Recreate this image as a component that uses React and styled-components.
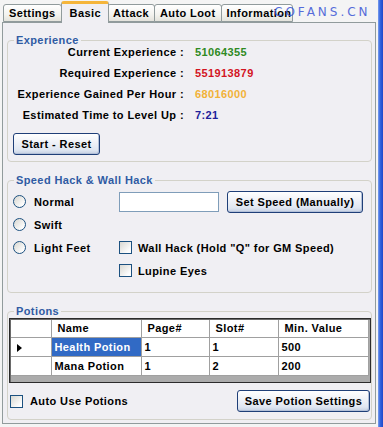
import React from 'react';
import styled, { createGlobalStyle } from 'styled-components';

const Global = createGlobalStyle`
  html, body { margin: 0; padding: 0; background: #f3f3f3; }
  body { font-family: "Liberation Sans", Arial, sans-serif; }
  * { box-sizing: border-box; }
`;

const PANEL_BG = '#f0eff3';

const Window = styled.div`
  position: relative;
  width: 383px;
  height: 427px;
  display: flex;
  overflow: hidden;
  background: #f4f4f4;
  font-family: "Liberation Sans", Arial, sans-serif;
  font-size: 11px;
  font-weight: bold;
  letter-spacing: 0.4px;
  color: #000;
`;

const Main = styled.div`
  flex: 1;
  min-width: 0;
  display: flex;
  flex-direction: column;
  padding: 0 2px 3px 2px;
`;

const Frame = styled.div`
  width: 5px;
  background: linear-gradient(90deg, #7d9fee 0%, #3567e0 40%, #1d47c9 100%);
`;

const TabStrip = styled.div`
  height: 22px;
  display: flex;
  align-items: flex-end;
  padding-left: 1px;
  position: relative;
  z-index: 2;
`;

const Tab = styled.div`
  height: ${p => (p.$active ? '22px' : '18px')};
  margin: ${p => (p.$active ? '0 -1px -1px -1px' : '0')};
  padding: ${p => (p.$active ? '3px 7px 0 8px' : '2px 5px 0 5px')};
  width: ${p => (p.$w ? `${p.$w}px` : 'auto')};
  overflow: hidden;
  white-space: nowrap;
  border: 1px solid #919b9c;
  border-bottom: ${p => (p.$active ? 'none' : '1px solid #919b9c')};
  border-top: ${p => (p.$active ? '3px solid #f5b53a' : '1px solid #919b9c')};
  border-radius: 3px 3px 0 0;
  background: ${p => (p.$active ? PANEL_BG : 'linear-gradient(#ffffff, #f3f3ef 60%, #e4e3dc)')};
  line-height: 13px;
  position: relative;
  z-index: ${p => (p.$active ? 3 : 1)};
  & + & { margin-left: -1px; }
`;

const Watermark = styled.div`
  position: absolute;
  left: 274px;
  top: 5px;
  font-family: "DejaVu Sans", sans-serif;
  font-size: 12px;
  font-weight: normal;
  letter-spacing: 3px;
  color: #3a55d6;
  opacity: 0.85;
  z-index: 5;
`;

const Panel = styled.div`
  flex: 1;
  border: 1px solid #919b9c;
  background: ${PANEL_BG};
  padding: 17px 3px 0 4px;
  display: flex;
  flex-direction: column;
`;

const GroupBox = styled.div`
  position: relative;
  border: 1px solid #d3d2c9;
  border-radius: 4px;
  margin-top: ${p => p.$mt || 0}px;
  padding: ${p => p.$pad};
`;

const GroupTitle = styled.div`
  position: absolute;
  top: -7px;
  left: 6px;
  padding: 0 2px;
  background: ${PANEL_BG};
  color: #2f5ba3;
  line-height: 13px;
`;

const ExpGrid = styled.div`
  display: grid;
  grid-template-columns: 176px auto;
  column-gap: 11px;
  grid-auto-rows: 21px;
  align-items: center;
`;

const ExpLabel = styled.div`
  text-align: right;
  white-space: nowrap;
`;

const ExpValue = styled.div`
  color: ${p => p.$color};
`;

const Button = styled.button`
  font: inherit;
  letter-spacing: inherit;
  color: #000;
  height: 22px;
  width: ${p => p.$w}px;
  margin-left: ${p => p.$ml || 0}px;
  margin-top: ${p => p.$mt || 0}px;
  padding: 0;
  border: 1px solid #1f3f78;
  border-radius: 3px;
  background: linear-gradient(#ffffff 0%, #eef1f7 45%, #dfe6f1 80%, #c4cfe2 100%);
  box-shadow: inset -1px -1px 0 #b3c0d8;
  cursor: default;
`;

const SpeedGrid = styled.div`
  display: grid;
  grid-template-columns: 106px 1fr;
  grid-template-rows: repeat(4, 23px);
  align-items: center;
`;

const OptionRow = styled.div`
  display: flex;
  align-items: center;
  white-space: nowrap;
`;

const Radio = styled.span`
  width: 13px;
  height: 13px;
  border-radius: 50%;
  border: 1px solid #1c5180;
  background: linear-gradient(135deg, #d6d5cf, #fdfdfd 80%);
  margin-right: 8px;
  flex: none;
`;

const Check = styled.span`
  width: 13px;
  height: 13px;
  border: 1px solid #1c5180;
  background: linear-gradient(135deg, #d9d8d2, #fdfdfd 80%);
  margin-left: ${p => p.$ml || 0}px;
  margin-right: ${p => p.$mr || 6}px;
  flex: none;
`;

const TextInput = styled.div`
  width: 100px;
  height: 20px;
  border: 1px solid #7f9db9;
  background: #fff;
`;

const GridWrap = styled.div`
  width: 362px;
  height: 65px;
  border: 1px solid #2b2b2b;
  box-shadow: inset 1px 1px 0 #6a6a6a;
  background: #ababab;
  padding: 1px 0 0 1px;
`;

const Table = styled.table`
  border-collapse: collapse;
  table-layout: fixed;
  width: 357px;
`;

const HeadCell = styled.th`
  height: 17px;
  padding: 0 0 0 6px;
  text-align: left;
  font-weight: bold;
  background: #fff;
  border-right: 1px solid #a0a0a0;
  border-bottom: 1px solid #a0a0a0;
  white-space: nowrap;
  width: ${p => p.$w}px;
`;

const Cell = styled.td`
  height: 19px;
  padding: 0 0 0 3px;
  background: ${p => (p.$sel ? '#316ac5' : '#fff')};
  color: ${p => (p.$sel ? '#fff' : '#000')};
  border-right: 1px solid #a0a0a0;
  border-bottom: 1px solid #a0a0a0;
  white-space: nowrap;
`;

const Arrow = styled.span`
  display: inline-block;
  width: 0;
  height: 0;
  margin-left: 3px;
  border-top: 4px solid transparent;
  border-bottom: 4px solid transparent;
  border-left: 5px solid #000;
  vertical-align: middle;
`;

const BottomRow = styled.div`
  display: flex;
  align-items: center;
  justify-content: space-between;
  margin-top: 7px;
  height: 22px;
  padding-right: 1px;
`;

const tabs = [
  { t: 'Settings' },
  { t: 'Basic', active: true },
  { t: 'Attack' },
  { t: 'Auto Loot' },
  { t: 'Information', w: 72 },
];

const potions = [
  { name: 'Health Potion', page: '1', slot: '1', min: '500', sel: true },
  { name: 'Mana Potion', page: '1', slot: '2', min: '200' },
];

export default function App() {
  return (
    <>
      <Global />
      <Window>
        <Main>
          <TabStrip>
            {tabs.map(tb => (
              <Tab key={tb.t} $active={tb.active} $w={tb.w}>{tb.t}</Tab>
            ))}
          </TabStrip>
          <Watermark>COFANS.CN</Watermark>
          <Panel>
            <GroupBox $pad="0 0 6px 0">
              <GroupTitle>Experience</GroupTitle>
              <ExpGrid>
                <ExpLabel>Current Experience :</ExpLabel>
                <ExpValue $color="#2e8a23">51064355</ExpValue>
                <ExpLabel>Required Experience :</ExpLabel>
                <ExpValue $color="#d3141f">551913879</ExpValue>
                <ExpLabel>Experience Gained Per Hour :</ExpLabel>
                <ExpValue $color="#f2b238">68016000</ExpValue>
                <ExpLabel>Estimated Time to Level Up :</ExpLabel>
                <ExpValue $color="#1d219a">7:21</ExpValue>
              </ExpGrid>
              <Button $w={87} $ml={5} $mt={8}>Start - Reset</Button>
            </GroupBox>

            <GroupBox $mt={18} $pad="9px 0 10px 5px">
              <GroupTitle>Speed Hack &amp; Wall Hack</GroupTitle>
              <SpeedGrid>
                <OptionRow><Radio />Normal</OptionRow>
                <OptionRow>
                  <TextInput />
                  <Button $w={136} $ml={8}>Set Speed (Manually)</Button>
                </OptionRow>
                <OptionRow><Radio />Swift</OptionRow>
                <div />
                <OptionRow><Radio />Light Feet</OptionRow>
                <OptionRow><Check />Wall Hack (Hold "Q" for GM Speed)</OptionRow>
                <div />
                <OptionRow><Check />Lupine Eyes</OptionRow>
              </SpeedGrid>
            </GroupBox>

            <GroupBox $mt={18} $pad="6px 0 7px 1px">
              <GroupTitle>Potions</GroupTitle>
              <GridWrap>
                <Table>
                  <thead>
                    <tr>
                      <HeadCell $w={40} />
                      <HeadCell $w={90}>Name</HeadCell>
                      <HeadCell $w={68}>Page#</HeadCell>
                      <HeadCell $w={69}>Slot#</HeadCell>
                      <HeadCell $w={90}>Min. Value</HeadCell>
                    </tr>
                  </thead>
                  <tbody>
                    {potions.map(p => (
                      <tr key={p.name}>
                        <Cell>{p.sel ? <Arrow /> : null}</Cell>
                        <Cell $sel={p.sel}>{p.name}</Cell>
                        <Cell>{p.page}</Cell>
                        <Cell>{p.slot}</Cell>
                        <Cell>{p.min}</Cell>
                      </tr>
                    ))}
                  </tbody>
                </Table>
              </GridWrap>
              <BottomRow>
                <OptionRow><Check $ml={1} $mr={7} />Auto Use Potions</OptionRow>
                <Button $w={133}>Save Potion Settings</Button>
              </BottomRow>
            </GroupBox>
          </Panel>
        </Main>
        <Frame />
      </Window>
    </>
  );
}
